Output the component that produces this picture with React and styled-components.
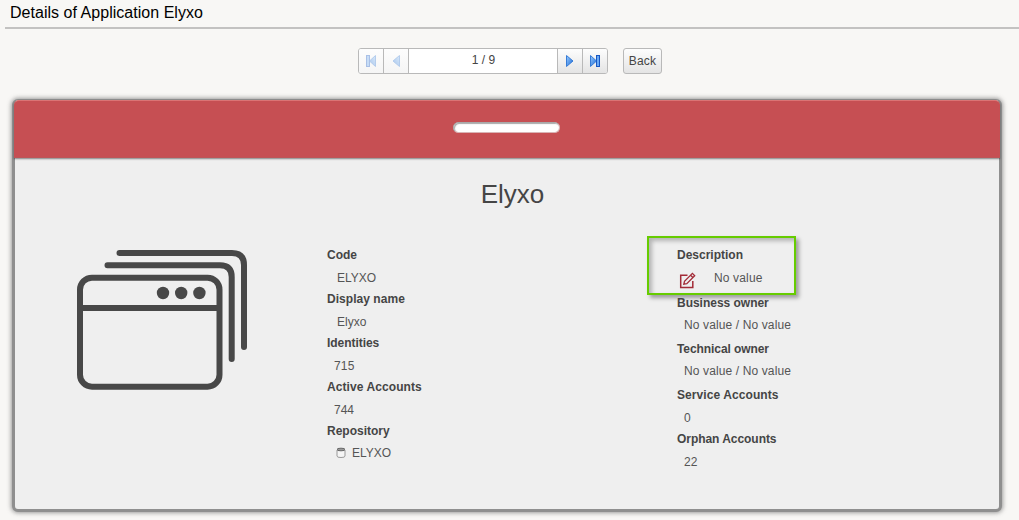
import React from "react";
import styled, { createGlobalStyle } from "styled-components";

const GlobalStyle = createGlobalStyle`
  * { box-sizing: border-box; }
  body {
    margin: 0;
    background: #f8f7f5;
    font-family: "Liberation Sans", Arial, sans-serif;
    font-size: 12px;
    color: #454545;
    overflow: hidden;
  }
`;

const Page = styled.main`
  height: 520px;
  display: flex;
  flex-direction: column;
`;

const PageTitle = styled.h1`
  margin: 0 0 0 5px;
  height: 29px;
  padding: 3px 0 0 5px;
  border-bottom: 2px solid #c3c2c1;
  font-size: 16px;
  font-weight: 400;
  line-height: 20px;
  letter-spacing: 0.03px;
  color: #000;
`;

const Toolbar = styled.nav`
  display: flex;
  gap: 15px;
  margin: 19px 0 0 358px;
  height: 26px;
`;

const Pager = styled.div`
  display: flex;
  width: 250px;
  border: 1px solid #b9b9b9;
  border-radius: 3px;
  background: #fff;
  overflow: hidden;
`;

const PagerButton = styled.button`
  width: 25px;
  padding: 0;
  border: 0 solid #b9b9b9;
  border-left-width: ${(p) => (p.$side === "left" ? 0 : 1)}px;
  border-right-width: ${(p) => (p.$side === "left" ? 1 : 0)}px;
  background: ${(p) => (p.disabled ? "linear-gradient(#fdfdfd, #f5f5f5)" : "linear-gradient(#fdfdfd, #e4e4e4)")};
  display: flex;
  align-items: center;
  justify-content: center;
  svg { display: block; opacity: ${(p) => (p.disabled ? 0.35 : 1)}; }
`;

const PageCount = styled.span`
  flex: 1;
  padding-left: 1px;
  text-align: center;
  line-height: 23px;
  color: #444;
`;

const BackButton = styled.button`
  width: 39px;
  padding: 0;
  border: 1px solid #b9b9b9;
  border-radius: 3px;
  background: linear-gradient(#fdfdfd, #e4e4e4);
  font: 12px "Liberation Sans", Arial, sans-serif;
  letter-spacing: 0.15px;
  color: #444;
`;

const Card = styled.section`
  margin: 25px 0 0 12px;
  width: 990px;
  height: 413px;
  border: solid #8f8f8f;
  border-width: 1px 3px 3px;
  border-radius: 6px;
  background: #efefef;
  box-shadow: 0 0 4px 1px rgba(80, 80, 80, 0.55);
`;

const CardHeader = styled.header`
  height: 58px;
  margin: 0 -1px;
  border-top: 1px solid #db7475;
  border-bottom: 1px solid #bd5558;
  border-radius: 5px 5px 0 0;
  background: #c64f53;
  box-shadow: 0 1px 2px rgba(0, 0, 0, 0.45);
  display: flex;
  justify-content: center;
  padding: 21px 2px 0 0;
`;

const Slot = styled.div`
  width: 107px;
  height: 11px;
  border-radius: 6px;
  background: #fff;
  border: 1px solid #d9b4b5;
  border-top-color: #a9a9a9;
  border-left-color: #aaa;
  box-shadow: inset 1px 1px 1px #aaa;
`;

const CardTitle = styled.h2`
  margin: 20px 0 0 11px;
  text-align: center;
  font-size: 26px;
  line-height: 32px;
  font-weight: 400;
`;

const CardBody = styled.div`
  display: grid;
  grid-template-columns: 312px 350px 1fr;
  margin-top: 35px;
`;

const Artwork = styled.div`
  padding: 3px 0 0 60px;
  svg { display: block; }
`;

const Field = styled.div`
  position: relative;
  height: ${(p) => p.$height || 44}px;
`;

const Label = styled.div`
  font-weight: 700;
  line-height: 20px;
  letter-spacing: ${(p) => p.$tracking ?? 0}px;
  white-space: nowrap;
`;

const Value = styled.div`
  display: flex;
  align-items: center;
  padding-left: ${(p) => p.$indent || 7}px;
  margin-top: ${(p) => p.$gap ?? 3}px;
  line-height: 20px;
  color: #555;
  white-space: nowrap;
  letter-spacing: ${(p) => p.$tracking || 0}px;
  svg { flex: none; }
`;

const IconText = styled.span`
  margin-left: ${(p) => p.$offset}px;
`;

const Highlight = styled.div`
  position: absolute;
  left: -30px;
  top: -9px;
  width: 149px;
  height: 59px;
  border: 2px solid #66cc00;
  box-shadow: 3px 3px 4px rgba(0, 0, 0, 0.35), inset 3px 3px 4px rgba(0, 0, 0, 0.25);
`;

const EditGlyph = styled.svg`
  margin-top: 2px;
  margin-bottom: -2px;
`;

function ArrowIcon({ back, bar }) {
  return (
    <svg width="12" height="14" viewBox="0 0 12 14">
      <defs>
        <linearGradient id="arrowFill" x1="0" x2="1" y1="0" y2="1">
          <stop offset="0" stopColor="#9accff" />
          <stop offset="1" stopColor="#1768d5" />
        </linearGradient>
      </defs>
      <g transform={back ? "translate(12 0) scale(-1 1)" : undefined}>
        <path d={bar ? "M1.5 1.5 7.5 7 1.5 12.5Z" : "M2.5 1.5 9 7 2.5 12.5Z"} fill="url(#arrowFill)" stroke="#367bd6" />
        {bar && <rect x="7.5" y="1.5" width="3" height="11" fill="#69a9f3" stroke="#1757c4" />}
      </g>
    </svg>
  );
}

function WindowsIcon() {
  return (
    <svg width="172" height="142" viewBox="75 248 172 142" fill="none" stroke="#484848" strokeWidth="6" strokeLinecap="round">
      <path d="M119.5 253H232Q244 253 244 265V347" />
      <path d="M107.5 265.3H220Q231.7 265.3 231.7 277V359" />
      <rect x="80" y="277.7" width="139.5" height="109" rx="12" />
      <path d="M80 308H219" strokeLinecap="butt" />
      <g fill="#484848" stroke="none">
        <circle cx="163" cy="293" r="6.2" />
        <circle cx="181.2" cy="293" r="6.2" />
        <circle cx="199.4" cy="293" r="6.2" />
      </g>
    </svg>
  );
}

function DatabaseIcon() {
  return (
    <svg width="10" height="12" viewBox="0 0 10 12" fill="#f5f5f5" stroke="#777">
      <path d="M1 3V9.2Q1 10.5 5 10.5T9 9.2V3" stroke="#999" />
      <ellipse cx="5" cy="2.5" rx="4" ry="1.3" fill="#999" stroke="#666" />
    </svg>
  );
}

function EditIcon() {
  return (
    <EditGlyph width="17" height="17" viewBox="0 0 17 17" fill="none" stroke="#a32b37" strokeWidth="1.5">
      <path d="M8.5 3.2H1.7V15.5H13.8V9" />
      <path d="M4.8 12.2 5.5 9.3 13.4 1.4 15.7 3.7 7.8 11.6ZM11.6 3.2 13.9 5.5" strokeWidth="1.3" />
    </EditGlyph>
  );
}

export default function App() {
  return (
    <>
      <GlobalStyle />
      <Page>
        <PageTitle>Details of Application Elyxo</PageTitle>
        <Toolbar>
          <Pager>
            <PagerButton disabled $side="left" aria-label="First"><ArrowIcon back bar /></PagerButton>
            <PagerButton disabled $side="left" aria-label="Previous"><ArrowIcon back /></PagerButton>
            <PageCount>1 / 9</PageCount>
            <PagerButton aria-label="Next"><ArrowIcon /></PagerButton>
            <PagerButton aria-label="Last"><ArrowIcon bar /></PagerButton>
          </Pager>
          <BackButton>Back</BackButton>
        </Toolbar>
        <Card>
          <CardHeader><Slot /></CardHeader>
          <CardTitle>Elyxo</CardTitle>
          <CardBody>
            <Artwork><WindowsIcon /></Artwork>
            <div>
              <Field><Label>Code</Label><Value $indent={10}>ELYXO</Value></Field>
              <Field><Label $tracking={0.04}>Display name</Label><Value $indent={10}>Elyxo</Value></Field>
              <Field><Label $tracking={-0.05}>Identities</Label><Value $tracking={0.15}>715</Value></Field>
              <Field><Label $tracking={0.08}>Active Accounts</Label><Value>744</Value></Field>
              <Field>
                <Label>Repository</Label>
                <Value $indent={9} $gap={2}><DatabaseIcon /><IconText $offset={6}>ELYXO</IconText></Value>
              </Field>
            </div>
            <div>
              <Field $height={48}>
                <Label>Description</Label>
                <Value $indent={2} $tracking={0.15}><EditIcon /><IconText $offset={18}>No value</IconText></Value>
                <Highlight />
              </Field>
              <Field $height={46}><Label $tracking={-0.02}>Business owner</Label><Value $gap={2} $tracking={0.12}>No value / No value</Value></Field>
              <Field $height={46}><Label $tracking={-0.08}>Technical owner</Label><Value $gap={2} $tracking={0.12}>No value / No value</Value></Field>
              <Field><Label $tracking={0.08}>Service Accounts</Label><Value>0</Value></Field>
              <Field><Label $tracking={-0.05}>Orphan Accounts</Label><Value>22</Value></Field>
            </div>
          </CardBody>
        </Card>
      </Page>
    </>
  );
}
